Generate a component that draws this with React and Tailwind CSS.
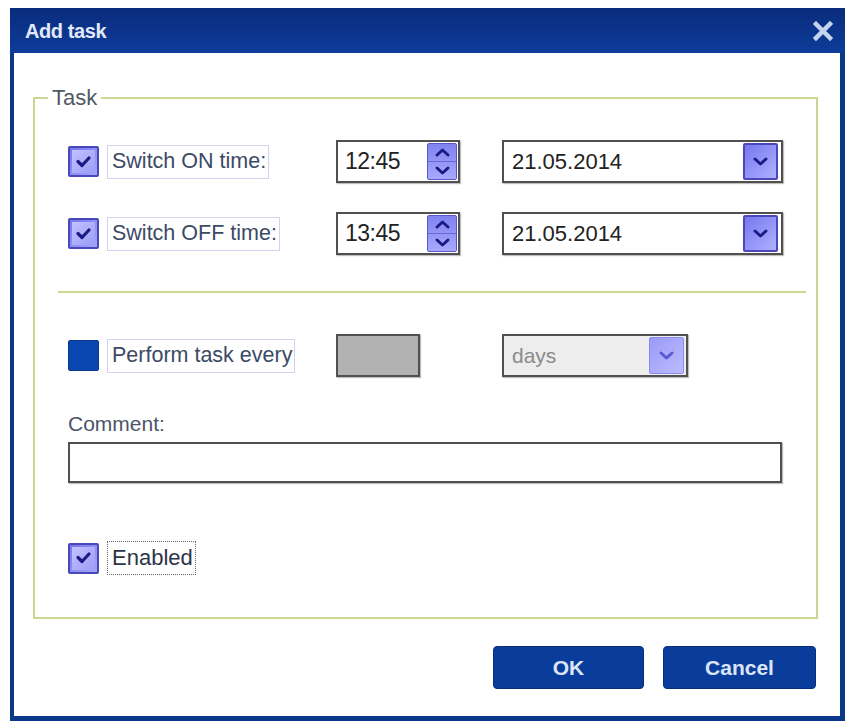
import React from "react";

const FONT = { fontFamily: '"Liberation Sans", Arial, sans-serif' };

function Check() {
  return (
    <svg width="17" height="14" viewBox="0 0 17 14">
      <path d="M3 6.5 L7 10.5 L14 3" fill="none" stroke="#1b1b86" strokeWidth="3.2" strokeLinecap="round" strokeLinejoin="round" />
    </svg>
  );
}

function Checkbox({ checked }) {
  if (!checked) {
    return <div className="w-[31px] h-[31px] shrink-0 bg-[#0a47b0] border border-[#0a3a90] rounded-[2px]" />;
  }
  return (
    <div className="w-[31px] h-[31px] shrink-0 rounded-[2px] border-2 border-[#4a48b8] bg-gradient-to-br from-[#7676ec] to-[#a4a4fb] flex items-center justify-center">
      <div className="w-[23px] h-[23px] bg-gradient-to-br from-[#c2c2ff] to-[#9c9cf6] flex items-center justify-center">
        <Check />
      </div>
    </div>
  );
}

function Chevron({ dir = "down", color = "#1b1b86" }) {
  const d = dir === "down" ? "M3 3 L8.5 8 L14 3" : "M3 8 L8.5 3 L14 8";
  return (
    <svg width="17" height="11" viewBox="0 0 17 11">
      <path d={d} fill="none" stroke={color} strokeWidth="3" strokeLinecap="round" strokeLinejoin="round" />
    </svg>
  );
}

function Spinner() {
  return (
    <div className="w-[30px] h-[37px] flex flex-col rounded-[2px] border border-[#5a58c8] bg-gradient-to-b from-[#8282f0] to-[#a8a8fc] overflow-hidden">
      <div className="flex-1 flex items-center justify-center border-b border-[#6a68d8]">
        <Chevron dir="up" />
      </div>
      <div className="flex-1 flex items-center justify-center">
        <Chevron dir="down" />
      </div>
    </div>
  );
}

function DropBtn({ light }) {
  return (
    <div
      className={
        light
          ? "w-[35px] h-[37px] rounded-[2px] border border-[#8c8cf0] bg-gradient-to-br from-[#9a9af6] to-[#bcbcff] flex items-center justify-center"
          : "w-[35px] h-[37px] rounded-[2px] border-2 border-[#4a48b8] bg-gradient-to-br from-[#7878ee] to-[#b0b0ff] flex items-center justify-center"
      }
    >
      <Chevron dir="down" color={light ? "#5a5ad0" : "#1b1b86"} />
    </div>
  );
}

function Label({ children, dotted }) {
  return (
    <div
      className={
        (dotted ? "border border-dotted border-[#666] text-[22px] " : "border border-[#d2d2ee] text-[21.5px] ") +
        "h-[34px] flex items-center pl-[4px] pr-[2px] text-[#3c4a66] leading-none whitespace-nowrap"
      }
    >
      {children}
    </div>
  );
}

function TimeRow({ label, time }) {
  return (
    <div className="flex items-center h-[43px]">
      <div className="w-[268px] flex items-center gap-[8px]">
        <Checkbox checked />
        <Label>{label}</Label>
      </div>
      <div className="w-[124px] h-[43px] border-2 border-[#505050] bg-white flex items-center justify-between pl-[7px] pr-[1px] shadow-[1px_1px_1px_rgba(0,0,0,0.25)]">
        <span className="text-[23px] text-[#222] tracking-[-0.5px]">{time}</span>
        <Spinner />
      </div>
      <div className="ml-[42px] w-[281px] h-[43px] border-2 border-[#505050] bg-white flex items-center justify-between pl-[8px] pr-[3px] shadow-[1px_1px_1px_rgba(0,0,0,0.25)]">
        <span className="text-[22px] text-[#222]">21.05.2014</span>
        <DropBtn />
      </div>
    </div>
  );
}

export default function App() {
  return (
    <div className="w-[851px] h-[726px] bg-white pt-[8px] pl-[10px]" style={FONT}>
      <div className="w-[835px] h-[713px] flex flex-col">
        <div className="h-[45px] shrink-0 bg-gradient-to-b from-[#0a2c7c] to-[#0d3c9a] flex items-center justify-between pl-[15px] pr-[10px]">
          <span className="text-[20px] font-bold text-[#e2eafa] tracking-[-0.4px]">Add task</span>
          <svg width="24" height="22" viewBox="0 0 24 22">
            <path d="M5 4 L19 18 M19 4 L5 18" stroke="#c4d4ee" strokeWidth="4.5" strokeLinecap="square" />
          </svg>
        </div>
        <div className="flex-1 flex flex-col bg-white border-l-[4px] border-r-[5px] border-b-[5px] border-[#0b3888] pl-[19px] pr-[22px]">
          <fieldset className="mt-[33px] border-2 border-[#ccd690] p-0 m-0">
            <legend className="ml-[13px] px-[4px] text-[22px] leading-[24px] text-[#505a66]">Task</legend>
            <div className="flex flex-col pl-[33px] pr-[33px] pb-[41px]">
              <div className="mt-[30px]">
                <TimeRow label="Switch ON time:" time="12:45" />
              </div>
              <div className="mt-[29px]">
                <TimeRow label="Switch OFF time:" time="13:45" />
              </div>
              <div className="mt-[36px] -ml-[10px] -mr-[23px] h-[2px] bg-[#cdd794]" />
              <div className="mt-[41px] flex items-center h-[43px]">
                <div className="w-[268px] flex items-center gap-[8px]">
                  <Checkbox checked={false} />
                  <Label>Perform task every</Label>
                </div>
                <div className="w-[84px] h-[43px] border-2 border-[#505050] bg-[#b2b2b2] shadow-[1px_1px_1px_rgba(0,0,0,0.25)]" />
                <div className="ml-[82px] w-[186px] h-[43px] border-2 border-[#505050] bg-[#ededed] flex items-center justify-between pl-[8px] pr-[2px] shadow-[1px_1px_1px_rgba(0,0,0,0.25)]">
                  <span className="text-[21px] text-[#8a8a8a]">days</span>
                  <DropBtn light />
                </div>
              </div>
              <div className="mt-[35px] text-[21px] leading-[24px] text-[#4a5668]">Comment:</div>
              <div className="mt-[6px] w-[714px] h-[41px] border-2 border-[#505050] bg-white shadow-[1px_1px_1px_rgba(0,0,0,0.25)]" />
              <div className="mt-[57px] flex items-center gap-[8px] h-[36px]">
                <Checkbox checked />
                <Label dotted>
                  <span className="text-[#2c3446]">Enabled</span>
                </Label>
              </div>
            </div>
          </fieldset>
          <div className="mt-[27px] flex justify-end gap-[19px] pr-[2px]">
            <button className="w-[151px] h-[43px] rounded-[4px] bg-[#0a3c9c] border border-[#082e7c] text-[21px] font-bold text-[#dbe5f6]">
              OK
            </button>
            <button className="w-[153px] h-[43px] rounded-[4px] bg-[#0a3c9c] border border-[#082e7c] text-[21px] font-bold text-[#dbe5f6]">
              Cancel
            </button>
          </div>
        </div>
      </div>
    </div>
  );
}
